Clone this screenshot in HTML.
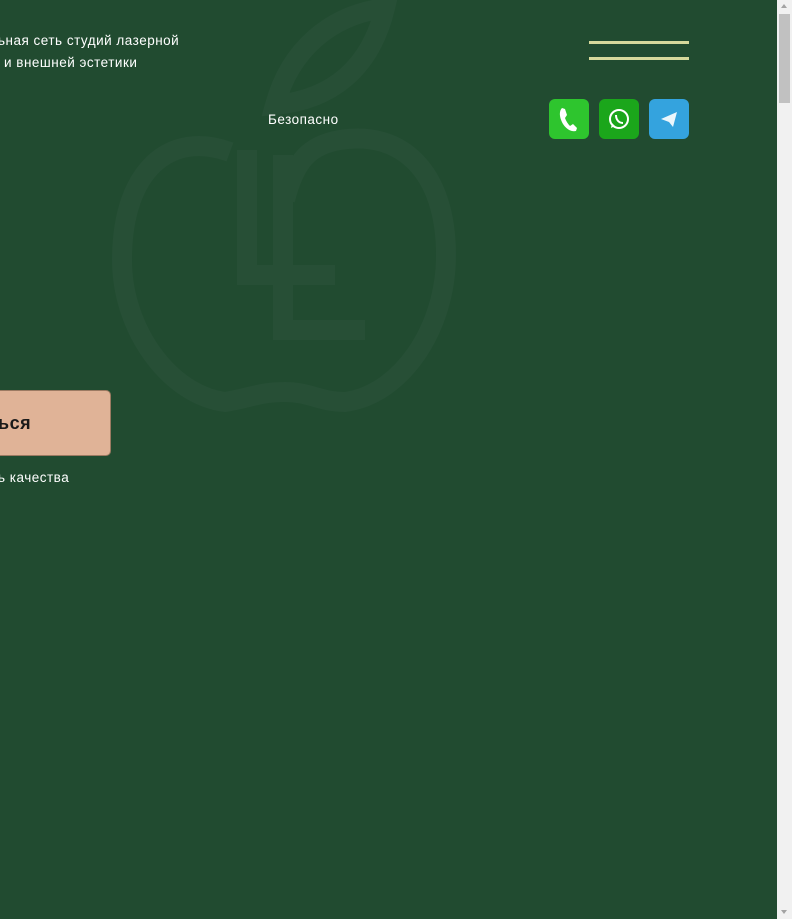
<!DOCTYPE html>
<html><head><meta charset="utf-8"><style>
html,body{margin:0;padding:0;width:792px;height:919px;overflow:hidden;background:#214b30;font-family:"Liberation Sans",sans-serif;color:#fff}
.t{position:absolute;font-size:13.5px;letter-spacing:0.5px;white-space:nowrap}
.sb{position:absolute;left:777px;top:0;width:15px;height:919px;background:#f1f1f1}
.thumb{position:absolute;left:779px;top:14px;width:11px;height:89px;background:#c1c1c1}
.ic{position:absolute;top:99px;width:40px;height:40px;border-radius:6px}
.bar{position:absolute;left:589px;width:100px;height:3px;background:#d6d99b}
</style></head><body>
<svg style="position:absolute;left:0;top:0" width="777" height="919">
<g fill="none" stroke="#274f36" stroke-width="20">
<path d="M230 152 C170 130 122 170 122 260 C122 330 170 395 225 402 C250 398 260 392 285 392 C310 392 320 402 345 402 C400 395 446 330 446 255 C446 170 400 130 340 140 C310 145 295 160 285 200"/>
<path d="M275 105 C290 50 330 15 385 8 C370 70 330 100 275 105 Z"/>
</g>
<g fill="#274f36">
<rect x="237" y="150" width="20" height="135"/>
<rect x="237" y="265" width="98" height="20"/>
<rect x="273" y="155" width="20" height="185"/>
<rect x="273" y="320" width="92" height="20"/>
</g>
</svg>
<div class="t" style="left:-2px;top:33px">ьная сеть студий лазерной</div>
<div class="t" style="left:4px;top:55px">и внешней эстетики</div>
<div class="t" style="left:268px;top:112px">Безопасно</div>
<div class="bar" style="top:41px"></div>
<div class="bar" style="top:57px"></div>
<div class="ic" style="left:549px;background:#2ec52e"><svg width="40" height="40"><path d="M13 9 C10 12 10 18 14 25 C18 31 23 33 27 32 L28 29 L24 25 L21 27 C19 25 17 22 16 19 L18 16 L16 10 Z" fill="#fff"/></svg></div>
<div class="ic" style="left:599px;background:#1ba61b"><svg width="40" height="40"><circle cx="20" cy="20" r="9" fill="none" stroke="#fff" stroke-width="2"/><path d="M12 29 L13 24 L16 27 Z" fill="#fff"/><path d="M17 16 C17 21 20 24 24 24" stroke="#fff" stroke-width="2" fill="none"/></svg></div>
<div class="ic" style="left:649px;background:#34a3de"><svg width="40" height="40"><path d="M12 20 L28 13 L24 28 L20 23 Z" fill="#fff" opacity=".9"/></svg></div>
<div style="position:absolute;left:-10px;top:390px;width:119px;height:64px;background:#e0b397;border-radius:5px;border:1px solid #9c7a62"></div>
<div class="t" style="left:-2px;top:413px;font-size:18px;font-weight:bold;color:#1a1a1a">ься</div>
<div class="t" style="left:-2px;top:470px">ь качества</div>
<div class="sb"></div><div class="thumb"></div>
<div style="position:absolute;left:781px;top:4px;width:0;height:0;border-left:3px solid transparent;border-right:3px solid transparent;border-bottom:4px solid #a3a3a3"></div>
<div style="position:absolute;left:781px;top:910px;width:0;height:0;border-left:3px solid transparent;border-right:3px solid transparent;border-top:4px solid #a3a3a3"></div>
</body></html>
